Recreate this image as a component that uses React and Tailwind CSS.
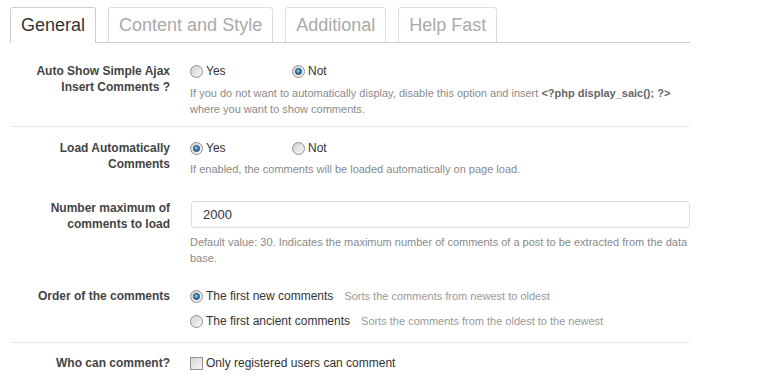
import React from "react";

function Radio({ checked }) {
  return (
    <span className="inline-flex h-[13px] w-[13px] shrink-0 items-center justify-center rounded-full border border-[#8f9292] bg-[linear-gradient(135deg,#cfd1d1,#f7f7f7)]">
      {checked && (
        <span className="h-[7px] w-[7px] rounded-full border border-[#1b3c55] bg-[radial-gradient(circle_at_40%_35%,#8fd0f5,#1f6fa8_70%)]" />
      )}
    </span>
  );
}

function Option({ checked, children, className = "" }) {
  return (
    <label className={"flex items-center gap-[3px] leading-[16px] text-[12px] text-[#333] " + className}>
      <Radio checked={checked} />
      <span>{children}</span>
    </label>
  );
}

function Label({ children }) {
  return (
    <div className="text-right text-[12px] font-bold leading-[16px] text-[#444]">{children}</div>
  );
}

function Desc({ children, className = "" }) {
  return <p className={"text-[11px] leading-[16px] text-[#8a8a8a] " + className}>{children}</p>;
}

export default function App() {
  return (
    <div className="min-h-[380px] w-[761px] bg-white pt-[7px] font-['Liberation_Sans',Arial,sans-serif]">
      <div className="ml-[10px] w-[680px]">
        {/* Tabs */}
        <div className="flex gap-3 border-b border-[#cfcfcf]">
          <div className="-mb-px flex h-[36px] items-center rounded-t-[3px] border border-b-0 border-[#cfcfcf] bg-white px-[10px] pb-px text-[18px] text-[#333]">
            General
          </div>
          <div className="flex h-[35px] items-center rounded-t-[3px] border border-b-0 border-[#dcdcdc] px-[10px] text-[18px] text-[#aaa]">
            Content and Style
          </div>
          <div className="flex h-[35px] items-center rounded-t-[3px] border border-b-0 border-[#dcdcdc] px-[10px] text-[18px] text-[#aaa]">
            Additional
          </div>
          <div className="flex h-[35px] items-center rounded-t-[3px] border border-b-0 border-[#dcdcdc] px-[10px] text-[18px] text-[#aaa]">
            Help Fast
          </div>
        </div>

        {/* Row 1 */}
        <div className="grid grid-cols-[160px_1fr] gap-x-5 pt-[20px] pb-[9px]">
          <Label>
            Auto Show Simple Ajax
            <br />
            Insert Comments ?
          </Label>
          <div>
            <div className="flex">
              <Option className="w-[102px]">Yes</Option>
              <Option checked>Not</Option>
            </div>
            <Desc className="mt-[6px]">
              If you do not want to automatically display, disable this option and insert{" "}
              <b className="text-[#666]">&lt;?php display_saic(); ?&gt;</b>
              <br />
              where you want to show comments.
            </Desc>
          </div>
        </div>
        <div className="h-px bg-[#e8e8e8]" />

        {/* Row 2 */}
        <div className="grid grid-cols-[160px_1fr] gap-x-5 pt-[13px] pb-[9px]">
          <Label>
            Load Automatically
            <br />
            Comments
          </Label>
          <div>
            <div className="flex">
              <Option checked className="w-[102px]">Yes</Option>
              <Option>Not</Option>
            </div>
            <Desc className="mt-[5px]">If enabled, the comments will be loaded automatically on page load.</Desc>
          </div>
        </div>

        {/* Row 3 */}
        <div className="grid grid-cols-[160px_1fr] gap-x-5 pt-[14px] pb-[9px]">
          <Label>
            Number maximum of
            <br />
            comments to load
          </Label>
          <div className="pt-px">
            <input
              type="text"
              defaultValue="2000"
              className="ml-px block h-[27px] w-[499px] rounded-[3px] border border-[#dddddd] bg-white pl-[11px] text-[13px] text-[#333] outline-none"
            />
            <Desc className="mt-[6px]">
              Default value: 30. Indicates the maximum number of comments of a post to be extracted from the data
              <br />
              base.
            </Desc>
          </div>
        </div>

        {/* Row 4 */}
        <div className="grid grid-cols-[160px_1fr] gap-x-5 pt-[13px] pb-[13px]">
          <Label>Order of the comments</Label>
          <div className="flex flex-col gap-[9px]">
            <div className="flex items-center">
              <Option checked>The first new comments</Option>
              <span className="ml-[11px] text-[11px] leading-[16px] text-[#999]">
                Sorts the comments from newest to oldest
              </span>
            </div>
            <div className="flex items-center">
              <Option>The first ancient comments</Option>
              <span className="ml-[11px] text-[11px] leading-[16px] text-[#999]">
                Sorts the comments from the oldest to the newest
              </span>
            </div>
          </div>
        </div>
        <div className="h-px bg-[#e8e8e8]" />

        {/* Row 5 */}
        <div className="grid grid-cols-[160px_1fr] gap-x-5 pt-[12px] pb-[9px]">
          <Label>Who can comment?</Label>
          <label className="flex items-center gap-[3px] text-[12px] leading-[16px] text-[#333]">
            <span className="h-[13px] w-[13px] shrink-0 border border-[#8f9292] bg-[linear-gradient(135deg,#d4d4d4,#f8f8f8)]" />
            <span>Only registered users can comment</span>
          </label>
        </div>
      </div>
    </div>
  );
}
